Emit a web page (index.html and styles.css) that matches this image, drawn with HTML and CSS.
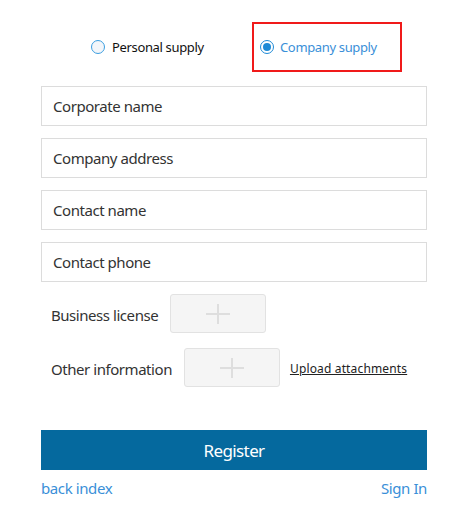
FILE: index.html
```html
<!DOCTYPE html>
<html>
<head>
<meta charset="utf-8">
<link rel="stylesheet" href="styles.css">
</head>
<body>
<div class="page">
  <div class="type-row">
    <label class="opt opt-personal">
      <span class="radio"></span>
      <span class="opt-text">Personal supply</span>
    </label>
    <label class="opt opt-company">
      <span class="radio radio-on"><span class="dot"></span></span>
      <span class="opt-text">Company supply</span>
    </label>
  </div>
  <div class="fields">
    <div class="field">Corporate name</div>
    <div class="field">Company address</div>
    <div class="field">Contact name</div>
    <div class="field">Contact phone</div>
  </div>
  <div class="uploads">
    <div class="up-row">
      <span class="up-label">Business license</span>
      <span class="up-box"><span class="plus"></span></span>
    </div>
    <div class="up-row">
      <span class="up-label">Other information</span>
      <span class="up-box"><span class="plus"></span></span>
      <a class="attach">Upload attachments</a>
    </div>
  </div>
  <div class="btn">Register</div>
  <div class="links">
    <a class="link">back index</a>
    <a class="link">Sign In</a>
  </div>
</div>
</body>
</html>
```
FILE: styles.css
```css
* { box-sizing: border-box; }
html, body { margin: 0; padding: 0; background: #fff; }
body { font-family: "Noto Sans", "Open Sans", sans-serif; color: #333; }
.page { width: 386px; margin-left: 41px; padding-top: 22px; }
.type-row { display: flex; align-items: center; height: 50px; }
.opt { display: flex; align-items: center; font-size: 13px; letter-spacing: -0.35px; }
.opt-personal { margin-left: 50px; width: 161px; color: #111; }
.opt-company {
  width: 150px; height: 50px;
  border: 2px solid #f01a1a;
  padding-left: 6px;
  color: #3a8fd8;
}
.opt-company .radio { margin-right: 6px; }
.radio {
  width: 14px; height: 14px; border-radius: 50%; flex: none;
  border: 1px solid #3b9ee0; background: #f3f6fa;
  margin-right: 7px; display: flex; align-items: center; justify-content: center;
}
.radio-on { background: #fff; border-color: #1e8ad6; }
.dot { width: 8px; height: 8px; border-radius: 50%; background: #1e8ad6; }
.fields { margin-top: 14px; display: flex; flex-direction: column; gap: 12px; }
.field {
  height: 40px; border: 1px solid #dcdcdc;
  padding-left: 11px; display: flex; align-items: center;
  font-size: 15px; letter-spacing: -0.45px; color: #333;
}
.uploads { margin-top: 12px; display: flex; flex-direction: column; gap: 15px; padding-left: 10px; }
.up-row { display: flex; align-items: center; height: 39px; }
.up-label { font-size: 15px; letter-spacing: -0.45px; color: #333; margin-right: 12px; padding-top: 3px; }
.up-box {
  width: 96px; height: 39px; background: #f5f5f5;
  border: 1px solid #e2e2e2; border-radius: 3px;
  position: relative; display: block;
}
.plus { position: absolute; left: 35px; top: 9px; width: 24px; height: 20px; }
.plus::before, .plus::after { content: ""; position: absolute; background: #dedede; }
.plus::before { left: 0; top: 9px; width: 24px; height: 2px; }
.plus::after { left: 11px; top: 0; width: 2px; height: 20px; }
.attach { margin-left: 10px; font-size: 12px; letter-spacing: 0.15px; color: #222; text-decoration: underline; padding-top: 1px; }
.btn {
  margin-top: 43px; height: 40px; background: #05699e; color: #fff;
  display: flex; align-items: center; justify-content: center; font-size: 17px; letter-spacing: -0.6px;
}
.links { display: flex; justify-content: space-between; margin-top: 8px; }
.link { font-size: 15px; letter-spacing: -0.4px; color: #3a8fd8; }
```
